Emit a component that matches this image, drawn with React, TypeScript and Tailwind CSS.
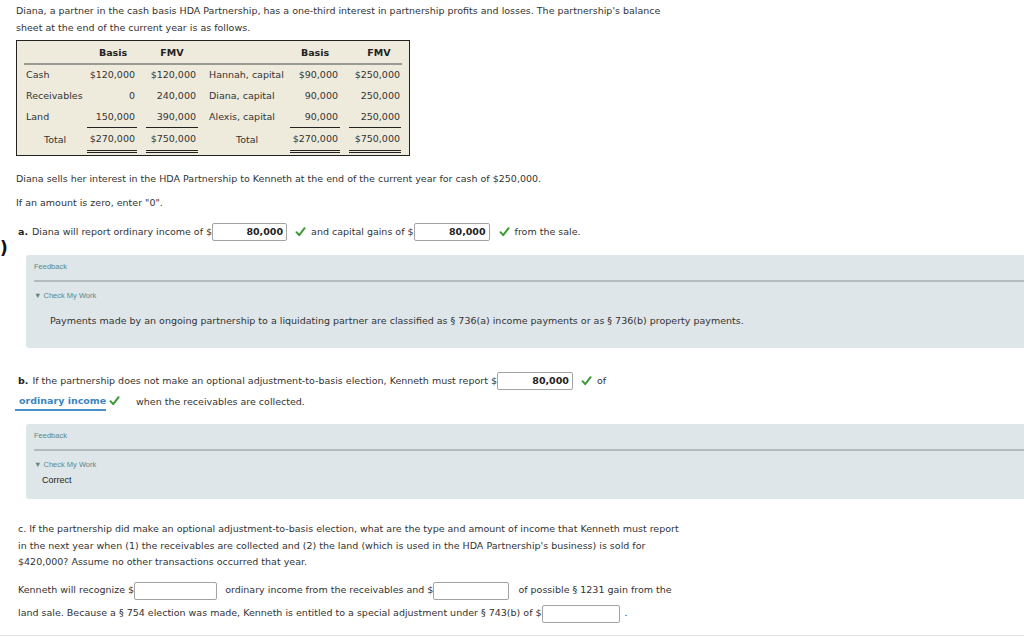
import React from 'react';

const Check = () => (
  <svg width="11" height="10" viewBox="0 0 11 10" className="inline-block">
    <path d="M1.5 5.2 L4.2 8.2 L9.6 1.2" fill="none" stroke="#3d9b35" strokeWidth="2" strokeLinecap="round" strokeLinejoin="round" />
  </svg>
);

const Input = ({ value = '', w }: { value?: string; w: string }) => (
  <span className={`inline-flex items-center justify-end ${w} h-[18px] bg-white border border-[#a3a3a3] rounded-[2px] pr-[3px] font-bold text-[#222] align-middle`}>
    {value}
  </span>
);

const FeedbackBox = ({ children, h }: { children: React.ReactNode; h: string }) => (
  <div className={`ml-[10px] -mr-4 ${h} bg-[#dfe6e9] rounded-l-[3px] pl-[8px] pt-[6px]`}>
    <div className="text-[7.5px] leading-[12px] text-[#5b8886] font-['Liberation_Sans',sans-serif]">Feedback</div>
    <div className="mt-[7px] border-t-2 border-[#b2bcc0]" />
    <div className="mt-[8px] text-[7.5px] leading-[12px] text-[#5b8886] font-['Liberation_Sans',sans-serif]">▼ Check My Work</div>
    {children}
  </div>
);

export default function App() {
  const rows = [
    ['Cash', '$120,000', '$120,000', 'Hannah, capital', '$90,000', '$250,000'],
    ['Receivables', '0', '240,000', 'Diana, capital', '90,000', '250,000'],
    ['Land', '150,000', '390,000', 'Alexis, capital', '90,000', '250,000'],
  ];
  const grid = 'grid grid-cols-[54px_50px_52px_74px_50px_52px] gap-x-[9px]';

  return (
    <div className="relative w-[1024px] h-[637px] overflow-hidden bg-white px-4 text-[9.5px] text-[#333] font-['DejaVu_Sans',Verdana,sans-serif]">
      <p className="pt-[2px] leading-[17px]">
        Diana, a partner in the cash basis HDA Partnership, has a one-third interest in partnership profits and losses. The partnership's balance
        <br />
        sheet at the end of the current year is as follows.
      </p>

      {/* balance sheet */}
      <div className="mt-[4px] w-[394px] h-[116px] bg-[#eeebdd] border border-[#222] px-[7px] pt-[3px]">
        <div className={`${grid} h-[21px] items-center border-b-2 border-[#9a9a94] font-bold text-[#222]`}>
          <span />
          <span className="text-center pl-[2px]">Basis</span>
          <span className="text-center">FMV</span>
          <span />
          <span className="text-center">Basis</span>
          <span className="text-center pl-[8px]">FMV</span>
        </div>
        {rows.map((r, i) => (
          <div key={i} className={`${grid} h-[21px] items-center`}>
            <span className="pl-[2px]">{r[0]}</span>
            <span className={`text-right pr-[2px] h-full flex items-center justify-end ${i === 2 ? 'border-b border-[#222]' : ''}`}>{r[1]}</span>
            <span className={`text-right pr-[2px] h-full flex items-center justify-end ${i === 2 ? 'border-b border-[#222]' : ''}`}>{r[2]}</span>
            <span className="pl-[2px] whitespace-nowrap">{r[3]}</span>
            <span className={`text-right pr-[2px] h-full flex items-center justify-end ${i === 2 ? 'border-b border-[#222]' : ''}`}>{r[4]}</span>
            <span className={`text-right pr-[1px] h-full flex items-center justify-end ${i === 2 ? 'border-b border-[#222]' : ''}`}>{r[5]}</span>
          </div>
        ))}
        <div className={`${grid} h-[25px]`}>
          <span className="pl-[20px] flex items-center">Total</span>
          <span className="border-b-[3px] border-double border-[#222] flex items-center justify-end pr-[2px]">$270,000</span>
          <span className="border-b-[3px] border-double border-[#222] flex items-center justify-end pr-[2px]">$750,000</span>
          <span className="pl-[29px] flex items-center">Total</span>
          <span className="border-b-[3px] border-double border-[#222] flex items-center justify-end pr-[2px]">$270,000</span>
          <span className="border-b-[3px] border-double border-[#222] flex items-center justify-end pr-[1px]">$750,000</span>
        </div>
      </div>

      <p className="mt-[14px] leading-[17px]">Diana sells her interest in the HDA Partnership to Kenneth at the end of the current year for cash of $250,000.</p>
      <p className="mt-[7px] leading-[17px]">If an amount is zero, enter "0".</p>

      {/* a */}
      <div className="mt-[9px] h-[24px] flex items-center pl-[2px] whitespace-nowrap">
        <b className="text-[#222]">a.</b>
        <span className="ml-[4px]">Diana will report ordinary income of $</span>
        <Input value="80,000" w="w-[75px]" />
        <span className="ml-[8px]"><Check /></span>
        <span className="ml-[5px]">and capital gains of $</span>
        <Input value="80,000" w="w-[76px]" />
        <span className="ml-[9px]"><Check /></span>
        <span className="ml-[5px]">from the sale.</span>
      </div>
      <span className="absolute left-0 top-[238px] text-[17px] leading-[20px] font-bold text-[#111]">)</span>

      <div className="mt-[11px]">
        <FeedbackBox h="h-[93px]">
          <p className="mt-[13px] pl-[16px] leading-[12px]">
            Payments made by an ongoing partnership to a liquidating partner are classified as § 736(a) income payments or as § 736(b) property payments.
          </p>
        </FeedbackBox>
      </div>

      {/* b */}
      <div className="mt-[21px] h-[24px] flex items-center pl-[2px] whitespace-nowrap">
        <b className="text-[#222]">b.</b>
        <span className="ml-[4px]">If the partnership does not make an optional adjustment-to-basis election, Kenneth must report $</span>
        <Input value="80,000" w="w-[76px]" />
        <span className="ml-[8px]"><Check /></span>
        <span className="ml-[5px]">of</span>
      </div>
      <div className="h-[18px] flex items-center whitespace-nowrap">
        <span className="w-[91px] -ml-[1px] h-full flex items-center pl-[4px] border-b-2 border-[#4a90c8] font-bold text-[#3a85c0]">
          ordinary income <span className="ml-[3px]"><Check /></span>
        </span>
        <span className="ml-[30px]">when the receivables are collected.</span>
      </div>

      <div className="mt-[13px]">
        <FeedbackBox h="h-[75px]">
          <p className="mt-[3px] pl-[8px] leading-[12px] text-[9px] text-[#222] font-['Liberation_Sans',sans-serif]">Correct</p>
        </FeedbackBox>
      </div>

      {/* c */}
      <p className="mt-[22px] pl-[2px] leading-[16.5px]">
        c. If the partnership did make an optional adjustment-to-basis election, what are the type and amount of income that Kenneth must report
        <br />
        in the next year when (1) the receivables are collected and (2) the land (which is used in the HDA Partnership's business) is sold for
        <br />
        $420,000? Assume no other transactions occurred that year.
      </p>
      <div className="mt-[8px] h-[24px] flex items-center pl-[2px] whitespace-nowrap">
        <span>Kenneth will recognize $</span>
        <Input w="w-[83px]" />
        <span className="ml-[8px]">ordinary income from the receivables and $</span>
        <Input w="w-[76px]" />
        <span className="ml-[9px]">of possible § 1231 gain from the</span>
      </div>
      <div className="h-[22px] flex items-center pl-[2px] whitespace-nowrap">
        <span>land sale. Because a § 754 election was made, Kenneth is entitled to a special adjustment under § 743(b) of $</span>
        <Input w="w-[78px]" />
        <span className="ml-[5px]">.</span>
      </div>
      <div className="absolute left-0 right-0 top-[635px] border-t border-[#e2e2e2]" />
    </div>
  );
}
